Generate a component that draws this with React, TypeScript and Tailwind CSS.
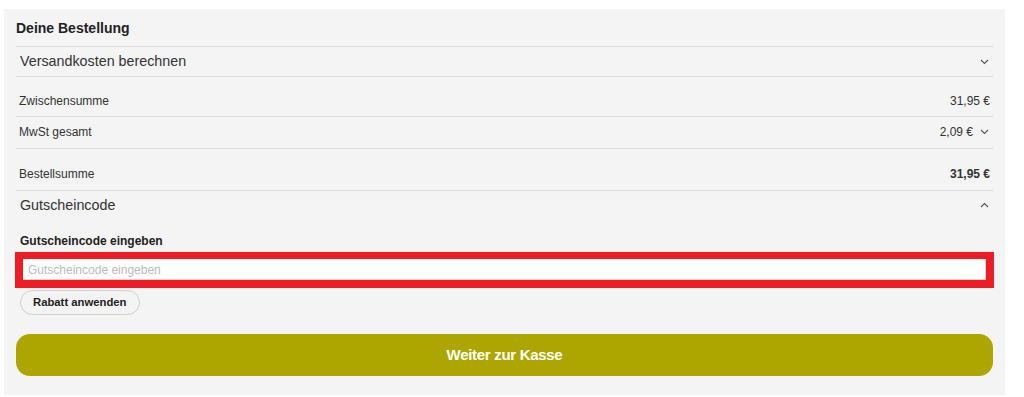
import React from "react";

function ChevronDown() {
  return (
    <svg width="9" height="6" viewBox="0 0 9 6" className="shrink-0">
      <polyline points="1,1 4.5,4.5 8,1" fill="none" stroke="#555" strokeWidth="1.1" />
    </svg>
  );
}

function ChevronUp() {
  return (
    <svg width="9" height="6" viewBox="0 0 9 6" className="shrink-0">
      <polyline points="1,5 4.5,1.5 8,5" fill="none" stroke="#555" strokeWidth="1.1" />
    </svg>
  );
}

export default function App() {
  return (
    <div
      className="bg-white h-[397px] pl-[4px] pt-[9px] pr-[19px] text-[#333]"
      style={{ fontFamily: '"Liberation Sans", Arial, sans-serif' }}
    >
      <div className="bg-[#f4f4f4] px-[12px] pb-[19px]">
        <div className="h-[38px] pt-[2px] flex items-center border-b border-[#dcdcdc] text-[14px] font-bold text-[#222]">
          Deine Bestellung
        </div>
        <div className="h-[30px] flex items-center justify-between border-b border-[#dcdcdc] pl-[4px] pr-[4px]">
          <span className="text-[14.3px] leading-none">Versandkosten berechnen</span>
          <ChevronDown />
        </div>
        <div className="flex justify-between items-center border-b border-[#dcdcdc] pt-[17px] pb-[8px] pl-[3px] pr-[3px] text-[12px] leading-[14px]">
          <span>Zwischensumme</span>
          <span>31,95 €</span>
        </div>
        <div className="flex justify-between items-center border-b border-[#dcdcdc] pt-[8px] pb-[9px] pl-[3px] pr-[4px] text-[12px] leading-[14px]">
          <span>MwSt gesamt</span>
          <span className="flex items-center gap-[7px]">
            <span>2,09 €</span>
            <ChevronDown />
          </span>
        </div>
        <div className="flex justify-between items-center border-b border-[#dcdcdc] pt-[18px] pb-[9px] pl-[3px] pr-[3px] text-[12px] leading-[14px]">
          <span>Bestellsumme</span>
          <span className="font-bold">31,95 €</span>
        </div>
        <div className="h-[27px] pt-[1px] flex items-center justify-between pl-[4px] pr-[4px]">
          <span className="text-[14.3px] leading-none">Gutscheincode</span>
          <ChevronUp />
        </div>
        <div className="pt-[16px] pl-[4px] text-[12px] leading-[14px] font-bold text-[#222]">
          Gutscheincode eingeben
        </div>
        <div className="mt-[4px] mx-[-1px] border-[7px] border-b-[8px] border-x-[8px] border-[#ee1c25]">
          <input
            className="block w-full h-[21px] bg-white border border-[#d4d4d4] border-t-white border-l-white px-[4px] text-[12px] outline-none placeholder:text-[#bbb]"
            placeholder="Gutscheincode eingeben"
            style={{ fontFamily: '"Liberation Sans", Arial, sans-serif' }}
          />
        </div>
        <div className="pl-[4px] pt-[1px]">
          <button className="h-[25px] px-[12px] rounded-full border border-[#cfcfcf] bg-[#f4f4f4] text-[11.3px] font-bold text-[#222]">
            Rabatt anwenden
          </button>
        </div>
        <button className="mt-[19px] w-full h-[42px] rounded-[14px] bg-[#aea600] text-white text-[15px] tracking-[-0.3px] font-bold flex items-center justify-center">
          Weiter zur Kasse
        </button>
      </div>
    </div>
  );
}
